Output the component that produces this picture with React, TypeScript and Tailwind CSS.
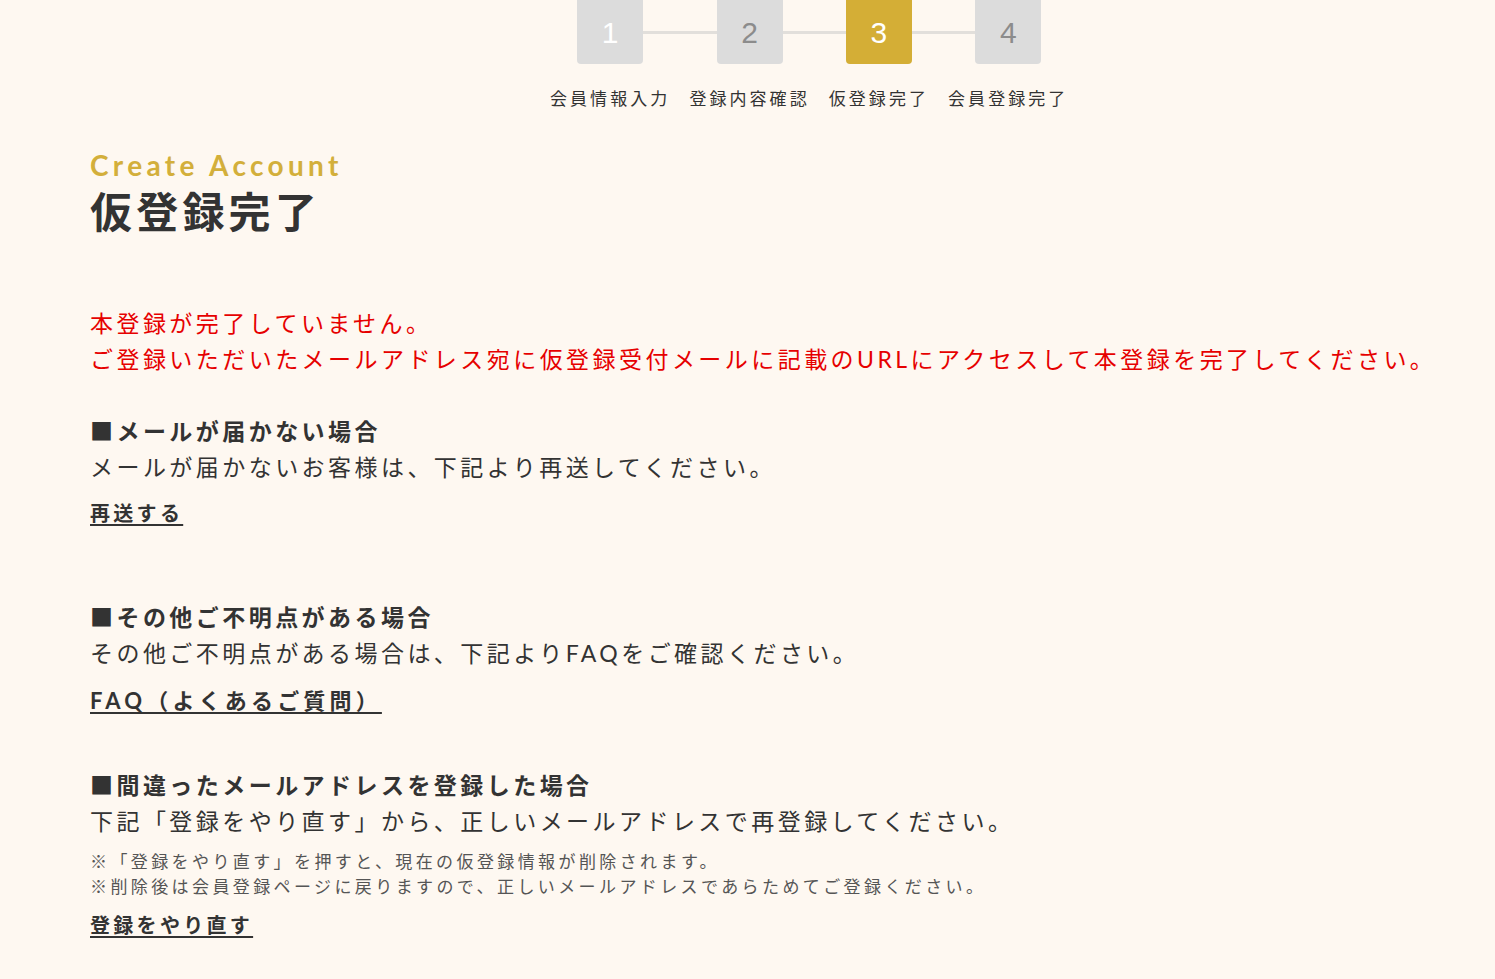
import React from 'react';

const FONT = "font-['Lato','Noto_Sans_CJK_JP',sans-serif]";

interface Step {
  num: string;
  label: string;
  active?: boolean;
  numClass: string;
}

const STEPS: Step[] = [
  { num: '1', label: '会員情報入力', numClass: 'text-white' },
  { num: '2', label: '登録内容確認', numClass: 'text-[#8c8c8c]' },
  { num: '3', label: '仮登録完了', active: true, numClass: 'text-white' },
  { num: '4', label: '会員登録完了', numClass: 'text-[#8c8c8c]' },
];

const Stepper: React.FC = () => (
  <div className="pl-[550px]">
    <div className="relative inline-flex gap-[19px]">
      {/* connector behind the boxes */}
      <div className="absolute left-[58px] right-[58px] top-[31px] h-[3px] bg-[#e2dfdb]" />
      {STEPS.map(s => (
        <div key={s.num} className="relative flex flex-col items-center">
          <div
            className={`flex h-16 w-[66px] items-center justify-center rounded-b-[4px] pt-px text-[30px] font-['Liberation_Sans',sans-serif] ${s.numClass} ${s.active ? 'bg-[#d4ae36]' : 'bg-[#dcdcdc]'}`}
          >
            {s.num}
          </div>
          <div className="mt-[25px] text-[17px] leading-5 tracking-[0.18em] text-[#333]">{s.label}</div>
        </div>
      ))}
    </div>
  </div>
);

const SectionTitle: React.FC<{ children: React.ReactNode; className?: string }> = ({ children, className }) => (
  <h3 className={`text-[23px] font-bold leading-9 tracking-[0.15em] text-[#333] ${className ?? ''}`}>{children}</h3>
);

const Body: React.FC<{ children: React.ReactNode }> = ({ children }) => (
  <p className="text-[23px] leading-9 tracking-[0.15em] text-[#333]">{children}</p>
);

const LinkText: React.FC<{ children: React.ReactNode; className?: string }> = ({ children, className }) => (
  <a
    href="#"
    className={`inline-block font-bold leading-[30px] text-[#333] underline decoration-2 underline-offset-[3px] ${className ?? 'text-[20px] tracking-[0.165em]'}`}
  >
    {children}
  </a>
);

export default function App() {
  return (
    <div className={`min-h-[979px] bg-[#fef8f1] ${FONT}`}>
      <Stepper />

      <div className="px-[90px]">
        <div className="mt-[39px] text-[28px] font-bold leading-[34px] tracking-[0.155em] text-[#d3af3b]">Create Account</div>
        <h1 className="mt-[5px] text-[42px] font-bold leading-[50px] tracking-[0.1em] text-[#333]">仮登録完了</h1>

        <div className="mt-[68px] text-[23px] leading-9 tracking-[0.15em] text-[#e60000]">
          <p>本登録が完了していません。</p>
          <p className="whitespace-nowrap">ご登録いただいたメールアドレス宛に仮登録受付メールに記載のURLにアクセスして本登録を完了してください。</p>
        </div>

        <SectionTitle className="mt-9">■メールが届かない場合</SectionTitle>
        <Body>メールが届かないお客様は、下記より再送してください。</Body>
        <div className="mt-[13px]">
          <LinkText>再送する</LinkText>
        </div>

        <SectionTitle className="mt-[71px]">■その他ご不明点がある場合</SectionTitle>
        <Body>その他ご不明点がある場合は、下記よりFAQをご確認ください。</Body>
        <div className="mt-[15px]">
          <LinkText className="text-[22px] tracking-[0.19em]">FAQ（よくあるご質問）</LinkText>
        </div>

        <SectionTitle className="mt-[51px]">■間違ったメールアドレスを登録した場合</SectionTitle>
        <Body>下記「登録をやり直す」から、正しいメールアドレスで再登録してください。</Body>
        <div className="mt-[10px] text-[17px] leading-[25px] tracking-[0.2em] text-[#555]">
          <p>※「登録をやり直す」を押すと、現在の仮登録情報が削除されます。</p>
          <p>※削除後は会員登録ページに戻りますので、正しいメールアドレスであらためてご登録ください。</p>
        </div>
        <div className="mt-[11px] pb-10">
          <LinkText>登録をやり直す</LinkText>
        </div>
      </div>
    </div>
  );
}
